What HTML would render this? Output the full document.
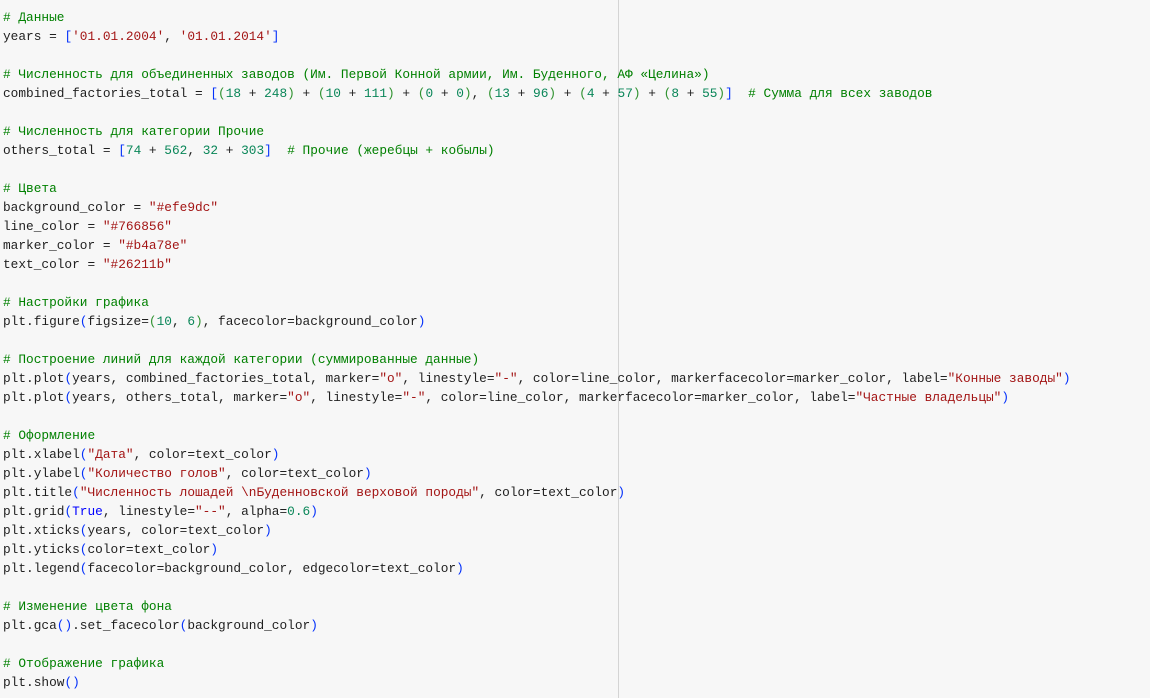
<!DOCTYPE html>
<html><head><meta charset="utf-8"><style>
html,body{margin:0;padding:0;width:1150px;height:698px;overflow:hidden;background:#f7f7f7;}
.v{position:absolute;left:618px;top:0;width:1px;height:698px;background:#d4d4d4;}
pre{position:absolute;left:3px;top:8px;margin:0;font-family:"Liberation Mono","DejaVu Sans Mono",monospace;font-size:12.8px;line-height:19px;color:#1f1f1f;}
.c{color:#008000}.s{color:#a31515}.n{color:#098658}.b{color:#0431fa}.g{color:#319331}.k{color:#0000ff}
</style></head><body><div class="v"></div>
<pre><span class="c"># Данные</span>
years = <span class="b">[</span><span class="s">'01.01.2004'</span>, <span class="s">'01.01.2014'</span><span class="b">]</span>

<span class="c"># Численность для объединенных заводов (Им. Первой Конной армии, Им. Буденного, АФ «Целина»)</span>
combined_factories_total = <span class="b">[</span><span class="g">(</span><span class="n">18</span> + <span class="n">248</span><span class="g">)</span> + <span class="g">(</span><span class="n">10</span> + <span class="n">111</span><span class="g">)</span> + <span class="g">(</span><span class="n">0</span> + <span class="n">0</span><span class="g">)</span>, <span class="g">(</span><span class="n">13</span> + <span class="n">96</span><span class="g">)</span> + <span class="g">(</span><span class="n">4</span> + <span class="n">57</span><span class="g">)</span> + <span class="g">(</span><span class="n">8</span> + <span class="n">55</span><span class="g">)</span><span class="b">]</span>  <span class="c"># Сумма для всех заводов</span>

<span class="c"># Численность для категории Прочие</span>
others_total = <span class="b">[</span><span class="n">74</span> + <span class="n">562</span>, <span class="n">32</span> + <span class="n">303</span><span class="b">]</span>  <span class="c"># Прочие (жеребцы + кобылы)</span>

<span class="c"># Цвета</span>
background_color = <span class="s">"#efe9dc"</span>
line_color = <span class="s">"#766856"</span>
marker_color = <span class="s">"#b4a78e"</span>
text_color = <span class="s">"#26211b"</span>

<span class="c"># Настройки графика</span>
plt.figure<span class="b">(</span>figsize=<span class="g">(</span><span class="n">10</span>, <span class="n">6</span><span class="g">)</span>, facecolor=background_color<span class="b">)</span>

<span class="c"># Построение линий для каждой категории (суммированные данные)</span>
plt.plot<span class="b">(</span>years, combined_factories_total, marker=<span class="s">"o"</span>, linestyle=<span class="s">"-"</span>, color=line_color, markerfacecolor=marker_color, label=<span class="s">"Конные заводы"</span><span class="b">)</span>
plt.plot<span class="b">(</span>years, others_total, marker=<span class="s">"o"</span>, linestyle=<span class="s">"-"</span>, color=line_color, markerfacecolor=marker_color, label=<span class="s">"Частные владельцы"</span><span class="b">)</span>

<span class="c"># Оформление</span>
plt.xlabel<span class="b">(</span><span class="s">"Дата"</span>, color=text_color<span class="b">)</span>
plt.ylabel<span class="b">(</span><span class="s">"Количество голов"</span>, color=text_color<span class="b">)</span>
plt.title<span class="b">(</span><span class="s">"Численность лошадей \nБуденновской верховой породы"</span>, color=text_color<span class="b">)</span>
plt.grid<span class="b">(</span><span class="k">True</span>, linestyle=<span class="s">"--"</span>, alpha=<span class="n">0.6</span><span class="b">)</span>
plt.xticks<span class="b">(</span>years, color=text_color<span class="b">)</span>
plt.yticks<span class="b">(</span>color=text_color<span class="b">)</span>
plt.legend<span class="b">(</span>facecolor=background_color, edgecolor=text_color<span class="b">)</span>

<span class="c"># Изменение цвета фона</span>
plt.gca<span class="b">()</span>.set_facecolor<span class="b">(</span>background_color<span class="b">)</span>

<span class="c"># Отображение графика</span>
plt.show<span class="b">()</span></pre>
</body></html>
